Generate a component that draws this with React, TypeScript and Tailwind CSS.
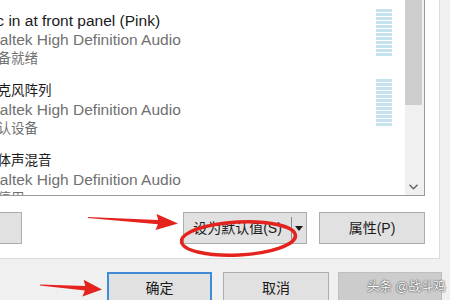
const font = "font-['Liberation_Sans','Noto_Sans_CJK_SC',sans-serif]";

type Line = { text: string; cjk: boolean };
type Device = { name: Line; driver: Line; status: Line; meter: boolean };

const driver: Line = { text: "Realtek High Definition Audio", cjk: false };

const devices: Device[] = [
  { name: { text: "Mic in at front panel (Pink)", cjk: false }, driver, status: { text: "准备就绪", cjk: true }, meter: true },
  { name: { text: "麦克风阵列", cjk: true }, driver, status: { text: "默认设备", cjk: true }, meter: true },
  { name: { text: "立体声混音", cjk: true }, driver, status: { text: "已停用", cjk: true }, meter: false },
];

function arrowPoints(tx: number, ty: number, px: number, py: number, L: number, W: number, w1: number, w0: number) {
  const len = Math.hypot(px - tx, py - ty);
  const ux = (px - tx) / len;
  const uy = (py - ty) / len;
  const nx = -uy;
  const ny = ux;
  const bx = px - ux * L;
  const by = py - uy * L;
  const wx = bx - ux * 2;
  const wy = by - uy * 2;
  const pts = [
    [tx + nx * w0, ty + ny * w0],
    [bx + nx * w1, by + ny * w1],
    [wx + nx * W, wy + ny * W],
    [px, py],
    [wx - nx * W, wy - ny * W],
    [bx - nx * w1, by - ny * w1],
    [tx - nx * w0, ty - ny * w0],
  ];
  return pts.map((p) => p.join(",")).join(" ");
}

function Meter() {
  return (
    <div className="mt-[9px] mr-[13px] flex w-[16px] flex-col gap-px">
      {Array.from({ length: 12 }).map((_, i) => (
        <div key={i} className="h-[3px] bg-[#c6e2ee]" />
      ))}
    </div>
  );
}

function TextLine({ line, color }: { line: Line; color: string }) {
  return (
    <div className={`${color} ${line.cjk ? "text-[13.5px]" : "-ml-[4px] text-[15.5px]"}`}>
      {line.text}
    </div>
  );
}

function DeviceRow({ d }: { d: Device }) {
  return (
    <div className="flex h-[70px] shrink-0">
      <div className="-ml-[16px] flex-1 whitespace-nowrap pt-[11px] leading-[19px]">
        <TextLine line={d.name} color="text-[#1a1a1a]" />
        <TextLine line={d.driver} color="text-[#707070]" />
        <TextLine line={d.status} color="text-[#707070]" />
      </div>
      {d.meter && <Meter />}
    </div>
  );
}

export default function App() {
  return (
    <div className={`relative h-[300px] w-[450px] overflow-hidden bg-[#f0f0f0] ${font}`}>
      {/* tab page */}
      <div className="h-[259px] w-[440px] border-r border-b border-[#dadada] bg-white">
        {/* device list */}
        <div className="flex h-[196px] w-[425px] border-r border-b border-[#9a9a9a]">
          <div className="flex flex-1 flex-col overflow-hidden">
            {devices.map((d) => (
              <DeviceRow key={d.name.text} d={d} />
            ))}
          </div>
          <div className="flex w-[19px] flex-col bg-[#f0f0f0]">
            <div className="h-[105px] w-[17px] bg-[#cdcdcd]" />
            <div className="flex-1" />
            <div className="flex h-[17px] items-center justify-center pr-[2px]">
              <svg width="9" height="6" viewBox="0 0 9 6">
                <polyline points="0.5,0.8 4.5,4.8 8.5,0.8" fill="none" stroke="#606060" strokeWidth="1.3" />
              </svg>
            </div>
          </div>
        </div>

        {/* action buttons */}
        <div className="mt-[16px] flex h-[32px] w-[425px] items-stretch text-[14px] text-[#1a1a1a]">
          <div className="-ml-[83px] w-[105px] border border-[#adadad] bg-[#e1e1e1]" />
          <div className="flex-1" />
          <div className="flex w-[124px] items-center border border-[#adadad] bg-[#e1e1e1]">
            <div className="flex-1 text-center">设为默认值(S)</div>
            <div className="h-[22px] w-px bg-[#8a8a8a]" />
            <div className="flex w-[14px] justify-center">
              <svg width="8" height="5" viewBox="0 0 8 5">
                <polygon points="0,0 8,0 4,5" fill="#1a1a1a" />
              </svg>
            </div>
          </div>
          <div className="ml-[12px] flex w-[106px] items-center justify-center border border-[#adadad] bg-[#e1e1e1]">
            属性(P)
          </div>
        </div>
      </div>

      {/* dialog buttons */}
      <div className="mt-[13px] flex h-[32px] pl-[107px] text-[14px] text-[#1a1a1a]">
        <div className="flex w-[105px] items-center justify-center border-2 border-[#3f8bd6] bg-[#e1e1e1]">确定</div>
        <div className="ml-[11px] flex w-[106px] items-center justify-center border border-[#adadad] bg-[#e1e1e1]">取消</div>
        <div className="ml-[9px] w-[104px] border border-[#bfbfbf] bg-[#cccccc]" />
      </div>

      {/* annotations */}
      <svg className="absolute inset-0" width="450" height="300" viewBox="0 0 450 300">
        <polygon points={arrowPoints(88, 217.5, 178, 223.5, 20, 8, 2.2, 0.6)} fill="#e5231e" />
        <polygon points={arrowPoints(40, 285, 102, 289.5, 17, 8.5, 2.2, 0.6)} fill="#e5231e" />
        <ellipse cx="238.5" cy="238.5" rx="57" ry="16.5" fill="none" stroke="#e5231e" strokeWidth="3.5" transform="rotate(-3 238.5 238.5)" />
      </svg>

      {/* watermark */}
      <div className="absolute top-[278px] left-[367px] text-[12.5px] leading-[18px] whitespace-nowrap text-white [text-shadow:0_0_1px_#333,0_0_2px_#555]">
        头条 @战斗鸡
      </div>
    </div>
  );
}
